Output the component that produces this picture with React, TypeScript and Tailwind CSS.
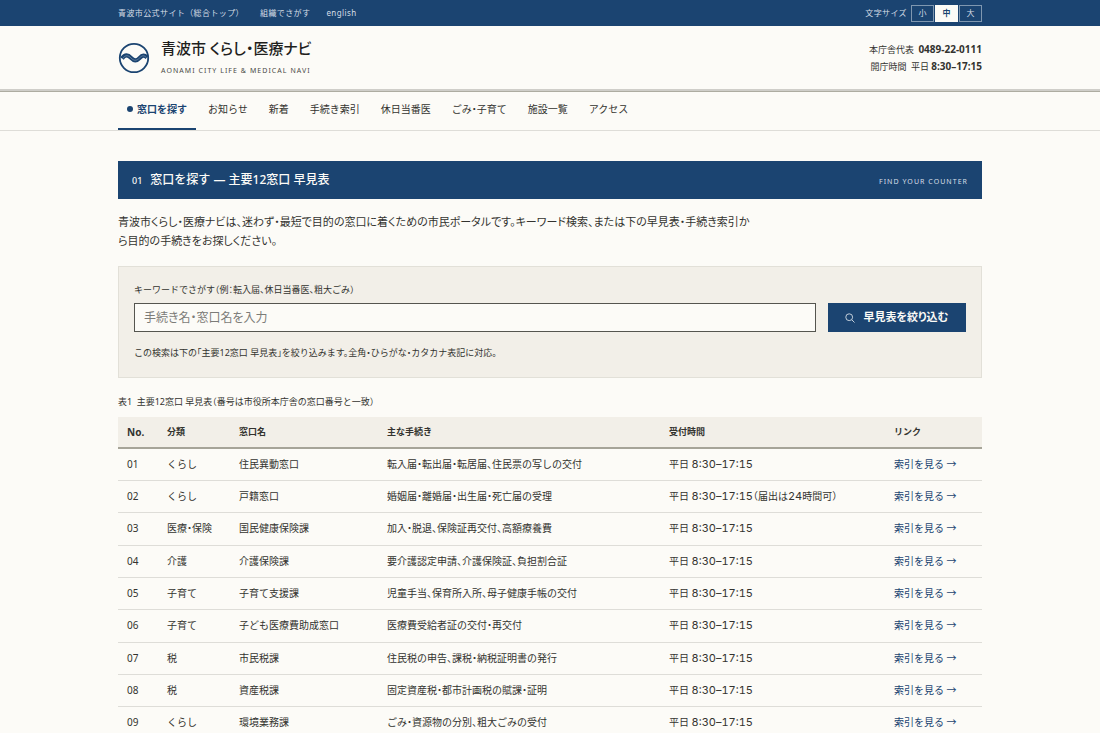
import { useState } from 'react';
import type { ReactNode } from 'react';

const navItems = [
  '窓口を探す',
  'お知らせ',
  '新着',
  '手続き索引',
  '休日当番医',
  'ごみ・子育て',
  '施設一覧',
  'アクセス',
];

const fontSizes = ['小', '中', '大'];

const counters = [
  { no: '01', category: 'くらし', name: '住民異動窓口', tasks: '転入届・転出届・転居届、住民票の写しの交付' },
  { no: '02', category: 'くらし', name: '戸籍窓口', tasks: '婚姻届・離婚届・出生届・死亡届の受理', allDay: true },
  { no: '03', category: '医療・保険', name: '国民健康保険課', tasks: '加入・脱退、保険証再交付、高額療養費' },
  { no: '04', category: '介護', name: '介護保険課', tasks: '要介護認定申請、介護保険証、負担割合証' },
  { no: '05', category: '子育て', name: '子育て支援課', tasks: '児童手当、保育所入所、母子健康手帳の交付' },
  { no: '06', category: '子育て', name: '子ども医療費助成窓口', tasks: '医療費受給者証の交付・再交付' },
  { no: '07', category: '税', name: '市民税課', tasks: '住民税の申告、課税・納税証明書の発行' },
  { no: '08', category: '税', name: '資産税課', tasks: '固定資産税・都市計画税の賦課・証明' },
  { no: '09', category: 'くらし', name: '環境業務課', tasks: 'ごみ・資源物の分別、粗大ごみの受付' },
];

const Container = ({ children, className = '' }: { children: ReactNode; className?: string }) => (
  <div className={`mx-auto w-full max-w-[896px] px-4 ${className}`}>{children}</div>
);

const Num = ({ children }: { children: ReactNode }) => (
  <span className="font-['Inter',sans-serif] text-[11px] leading-none tabular-nums">{children}</span>
);

const Logo = () => (
  <svg viewBox="0 0 32 32" className="size-8 shrink-0 text-[#1b4471]" fill="none" stroke="currentColor" aria-hidden="true">
    <circle cx="16" cy="16" r="14.2" strokeWidth="1.8" />
    <path d="M4 16.500c3-4.200 6-3.800 9-.6s5.500 3.400 8.500 .2 5-3 7.500-.6" strokeWidth="4.200" />
    <path d="M4.500 16.800c3-4.200 5.600-3.800 8.500-.8s5.500 3 8.500 0 4.600-2.600 6.800-.6" stroke="#8ea3b8" strokeWidth=".6" />
  </svg>
);

const App = () => {
  const [fontSize, setFontSize] = useState('中');
  const [keyword, setKeyword] = useState('');
  const [query, setQuery] = useState('');

  const rows = counters.filter((c) => `${c.category}${c.name}${c.tasks}`.includes(query));

  return (
    <div className="min-h-screen bg-[#fcfbf7] font-['Noto_Sans','Noto_Sans_CJK_JP',sans-serif] text-[10px] text-[#33332f] [font-feature-settings:'halt']">
      {/* 上部バー */}
      <div className="bg-[#1b4471] text-[8px] text-[#d6dee6]">
        <Container className="flex h-[26px] items-center justify-between">
          <div className="flex gap-4 tracking-wider">
            <a href="#top" className="[font-feature-settings:normal]">青波市公式サイト（総合トップ）</a>
            <a href="#org">組織でさがす</a>
            <a href="#en">english</a>
          </div>
          <div className="flex items-center gap-1">
            <span className="tracking-wider">文字サイズ</span>
            <div className="flex gap-px">
              {fontSizes.map((size) => (
                <button
                  key={size}
                  type="button"
                  onClick={() => setFontSize(size)}
                  className={`h-[17px] w-[23px] border leading-none ${
                    size === fontSize
                      ? 'border-[#fcfbf7] bg-[#fcfbf7] font-bold text-[#1b4471]'
                      : 'border-[#7f97b0]'
                  }`}
                >
                  {size}
                </button>
              ))}
            </div>
          </div>
        </Container>
      </div>

      {/* ヘッダー */}
      <header className="border-b border-[#adaca1]">
        <div className="border-b-2 border-[#cfcec9]">
          <Container className="flex h-[63px] items-center justify-between">
            <div className="flex items-center gap-[11px]">
              <Logo />
              <div>
                <h1 className="text-[15px] leading-[22px] font-medium text-[#1f1f1d] [font-feature-settings:'palt']">青波市 くらし・医療ナビ</h1>
                <p className="mt-1 text-[7px] leading-4 tracking-[0.15em] text-[#4a4a46]">AONAMI CITY LIFE &amp; MEDICAL NAVI</p>
              </div>
            </div>
            <div className="text-right text-[9px] leading-[17px]">
              <p>本庁舎代表&ensp;<b className="text-[10px]">0489-22-0111</b></p>
              <p>開庁時間&ensp;平日 <b className="text-[10px]">8:30–17:15</b></p>
            </div>
          </Container>
        </div>
      </header>

      <nav className="border-b border-[#deddd8]">
        <Container className="flex gap-[3px]">
          {navItems.map((item, i) => (
            <a
              key={item}
              href={`#nav-${i}`}
              className={`flex h-[38px] items-center border-b-2 px-[9px] pb-[2px] ${
                i === 0 ? 'border-[#1b4471] font-bold text-[#1b4471]' : 'border-transparent'
              }`}
            >
              {i === 0 && <span className="mr-1 size-[6px] rounded-full bg-[#1b4471]" />}
              {item}
            </a>
          ))}
        </Container>
      </nav>

      <main>
        <Container className="pt-[30px]">
          {/* 見出し */}
          <div className="flex items-baseline justify-between bg-[#1b4471] px-[14px] py-[9px] text-[#fcfbf7]">
            <h2 className="flex items-baseline gap-2 text-[12px] leading-[19px] font-medium">
              <span className="text-[9px]">01</span>
              窓口を探す — 主要12窓口 早見表
            </h2>
            <span className="text-[7px] tracking-[0.15em] text-[#d6dee6]">FIND YOUR COUNTER</span>
          </div>

          <p className="mt-[13px] max-w-[640px] text-[11px] leading-[19px] [font-feature-settings:'palt']">
            青波市くらし・医療ナビは、迷わず・最短で目的の窓口に着くための市民ポータルです。キーワード検索、または下の早見表・手続き索引から目的の手続きをお探しください。
          </p>

          {/* 検索 */}
          <form
            className="mt-4 border border-[#e2e0d8] bg-[#f2efe8] px-[15px] pt-[15px] pb-4"
            onSubmit={(e) => {
              e.preventDefault();
              setQuery(keyword);
            }}
          >
            <label htmlFor="keyword" className="block text-[9px] leading-4">
              キーワードでさがす（例：転入届、休日当番医、粗大ごみ）
            </label>
            <div className="mt-[5px] flex gap-3">
              <input
                id="keyword"
                type="text"
                value={keyword}
                onChange={(e) => setKeyword(e.target.value)}
                placeholder="手続き名・窓口名を入力"
                className="h-[29px] min-w-0 flex-1 border border-[#55554f] bg-[#fcfbf7] px-[9px] text-[12px] [font-feature-settings:'palt'] placeholder:text-[#7c7c78]"
              />
              <button type="submit" className="flex h-[29px] w-[138px] items-center justify-center gap-2 bg-[#1b4471] text-[11px] font-bold text-[#fcfbf7] [font-feature-settings:'palt']">
                <svg viewBox="0 0 10 10" className="size-[10px]" fill="none" stroke="#c3cfdb" aria-hidden="true">
                  <circle cx="4.200" cy="4.200" r="3.400" />
                  <path d="M6.700 6.700 9.500 9.500" />
                </svg>
                早見表を絞り込む
              </button>
            </div>
            <p className="mt-[13px] text-[9px] leading-4">
              この検索は下の「主要12窓口 早見表」を絞り込みます。全角・ひらがな・カタカナ表記に対応。
            </p>
          </form>

          {/* 早見表 */}
          <table className="mt-4 w-full table-fixed border-collapse text-left">
            <caption className="pb-[7px] text-left text-[9px] leading-4">
              表1&ensp;主要12窓口 早見表（番号は市役所本庁舎の窓口番号と一致）
            </caption>
            <colgroup>
              <col className="w-[40px]" />
              <col className="w-[72px]" />
              <col className="w-[148px]" />
              <col className="w-[282px]" />
              <col className="w-[225px]" />
              <col className="w-[97px]" />
            </colgroup>
            <thead>
              <tr className="h-[31px] border-b-2 border-[#a6a498] bg-[#f2efe8] text-[9px]">
                <th className="pl-[9px] text-[10px]">No.</th>
                <th className="pl-[9px]">分類</th>
                <th className="pl-[9px]">窓口名</th>
                <th className="pl-[9px]">主な手続き</th>
                <th className="pl-[9px]">受付時間</th>
                <th className="pl-[9px]">リンク</th>
              </tr>
            </thead>
            <tbody>
              {rows.map((row) => (
                <tr key={row.no} className="h-8 border-b border-[#deddd8] nth-[3n]:h-[33px]">
                  <td className="pl-[9px]">{row.no}</td>
                  <td className="pl-[9px]">{row.category}</td>
                  <td className="pl-[9px]">{row.name}</td>
                  <td className="pl-[9px]">{row.tasks}</td>
                  <td className="pl-[9px]">
                    平日 <Num>8:30–17:15</Num>
                    {row.allDay && <>（届出は<Num>24</Num>時間可）</>}
                  </td>
                  <td className="pl-[9px]">
                    <a href={`#index-${row.no}`} className="text-[#1b4471]">索引を見る →</a>
                  </td>
                </tr>
              ))}
            </tbody>
          </table>
        </Container>
      </main>
    </div>
  );
};

export default App;
